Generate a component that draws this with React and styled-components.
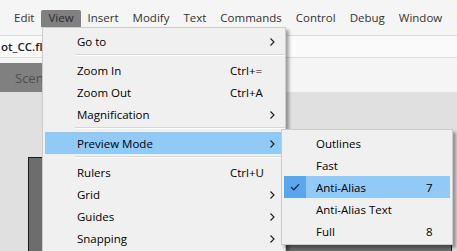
import React from "react";
import styled, { createGlobalStyle } from "styled-components";

const GlobalStyle = createGlobalStyle`
    html, body {
        margin: 0;
        padding: 0;
        background: #e0e0e0;
    }
    body {
        font-family: "Open Sans", "Noto Sans", sans-serif;
        font-size: 11.5px;
    }
`;

const Page = styled.div`
    position: relative;
    width: 457px;
    height: 251px;
    overflow: hidden;
    display: flex;
    flex-direction: column;
    background: #e0e0e0;
`;

const MenuBar = styled.div`
    display: flex;
    align-items: center;
    height: 36px;
    padding-left: 7px;
    background: #f5f5f5;
    border-bottom: 1px solid #dcdcdc;
    box-sizing: border-box;
    white-space: nowrap;
`;

const BarItem = styled.div`
    height: 17px;
    line-height: 16px;
    padding: 0 7px;
    margin-top: 2px;
    color: ${props => (props.active ? "#2b2b2b" : "#333")};
    background: ${props => (props.active ? "#808080" : "transparent")};
    border-radius: ${props => (props.active ? "2px 2px 0 0" : "0")};
`;

const DocTabs = styled.div`
    height: 22px;
    display: flex;
    align-items: center;
    background: #fafafa;
    border-bottom: 1px solid #dcdcdc;
    box-sizing: border-box;
`;

const DocTab = styled.span`
    padding-left: 1px;
    font-weight: 600;
    color: #222;
`;

const SceneRow = styled.div`
    height: 34px;
    padding-top: 5px;
    box-sizing: border-box;
    background: #f5f5f5;
`;

const SceneBar = styled.div`
    width: 220px;
    height: 29px;
    background: #808080;
    color: #505050;
    font-size: 13px;
    display: flex;
    align-items: center;
    padding-left: 15px;
    box-sizing: border-box;
`;

const Stage = styled.div`
    flex: 1;
    padding: 65px 5px 0 28px;
    display: flex;
    background: #e0e0e0;
`;

const Artboard = styled.div`
    flex: 1;
    background: #6d6d6d;
    border: 1px solid #1a1a1a;
    border-bottom: none;
`;

const Menu = styled.div`
    position: absolute;
    left: ${props => props.x}px;
    top: ${props => props.y}px;
    width: ${props => props.w}px;
    padding: 2px 0;
    background: #f0f0f0;
    border: 1px solid #cccccc;
    box-shadow: 3px 3px 3px rgba(0, 0, 0, 0.35);
    box-sizing: border-box;
    color: #000;
    z-index: ${props => props.z || 1};
`;

const Item = styled.div`
    display: grid;
    grid-template-columns: 32px 1fr ${props => props.cols || "40px 13px"};
    align-items: center;
    height: 22px;
    margin: 0 2px;
    background: ${props => (props.active ? "#91c9f7" : "transparent")};
    white-space: nowrap;
`;

const CheckCell = styled.div`
    width: 22px;
    height: 22px;
    display: flex;
    align-items: center;
    justify-content: center;
    background: ${props => (props.checked ? "#5aa7ed" : "transparent")};
`;

const Shortcut = styled.span`
    color: #000;
`;

const Arrow = styled.svg`
    width: 5px;
    height: 8px;
`;

const Separator = styled.div`
    height: 7px;
    padding-top: 2px;
    box-sizing: border-box;
    margin-left: 32px;
    &::after {
        content: "";
        display: block;
        height: 1px;
        background: #d7d7d7;
        border-bottom: 1px solid #fff;
    }
`;

const SubArrow = () => (
    <Arrow viewBox="0 0 5 8">
        <polyline points="0.5,0.5 4,4 0.5,7.5" fill="none" stroke="#1a1a1a" strokeWidth="1.1" />
    </Arrow>
);

const Check = () => (
    <svg width="10" height="8" viewBox="0 0 10 8">
        <polyline points="1,4 3.8,6.8 9,1.2" fill="none" stroke="#1f2d3d" strokeWidth="1.3" />
    </svg>
);

const viewMenu = [
    { label: "Go to", sub: true },
    { sep: true },
    { label: "Zoom In", key: "Ctrl+=" },
    { label: "Zoom Out", key: "Ctrl+A" },
    { label: "Magnification", sub: true },
    { sep: true },
    { label: "Preview Mode", sub: true, active: true },
    { sep: true },
    { label: "Rulers", key: "Ctrl+U" },
    { label: "Grid", sub: true },
    { label: "Guides", sub: true },
    { label: "Snapping", sub: true }
];

const previewMenu = [
    { label: "Outlines" },
    { label: "Fast" },
    { label: "Anti-Alias", key: "7", checked: true },
    { label: "Anti-Alias Text" },
    { label: "Full", key: "8" }
];

const bar = ["Edit", "View", "Insert", "Modify", "Text", "Commands", "Control", "Debug", "Window", "Help"];

const App = () => (
    <>
        <GlobalStyle />
        <Page>
            <MenuBar>
                {bar.map(name => (
                    <BarItem key={name} active={name === "View"}>{name}</BarItem>
                ))}
            </MenuBar>
            <DocTabs>
                <DocTab>ot_CC.fla</DocTab>
            </DocTabs>
            <SceneRow>
                <SceneBar>Scene 1</SceneBar>
            </SceneRow>
            <Stage>
                <Artboard />
            </Stage>

            <Menu x={42} y={27} w={244}>
                {viewMenu.map((it, i) =>
                    it.sep ? (
                        <Separator key={i} />
                    ) : (
                        <Item key={i} active={it.active}>
                            <span />
                            <span>{it.label}</span>
                            <Shortcut>{it.key}</Shortcut>
                            <span>{it.sub && <SubArrow />}</span>
                        </Item>
                    )
                )}
            </Menu>

            <Menu x={281} y={129} w={172} z={2}>
                {previewMenu.map(it => (
                    <Item key={it.label} active={it.checked} cols="24px 0px">
                        <CheckCell checked={it.checked}>{it.checked && <Check />}</CheckCell>
                        <span>{it.label}</span>
                        <Shortcut>{it.key}</Shortcut>
                        <span />
                    </Item>
                ))}
            </Menu>
        </Page>
    </>
);

export default App;
